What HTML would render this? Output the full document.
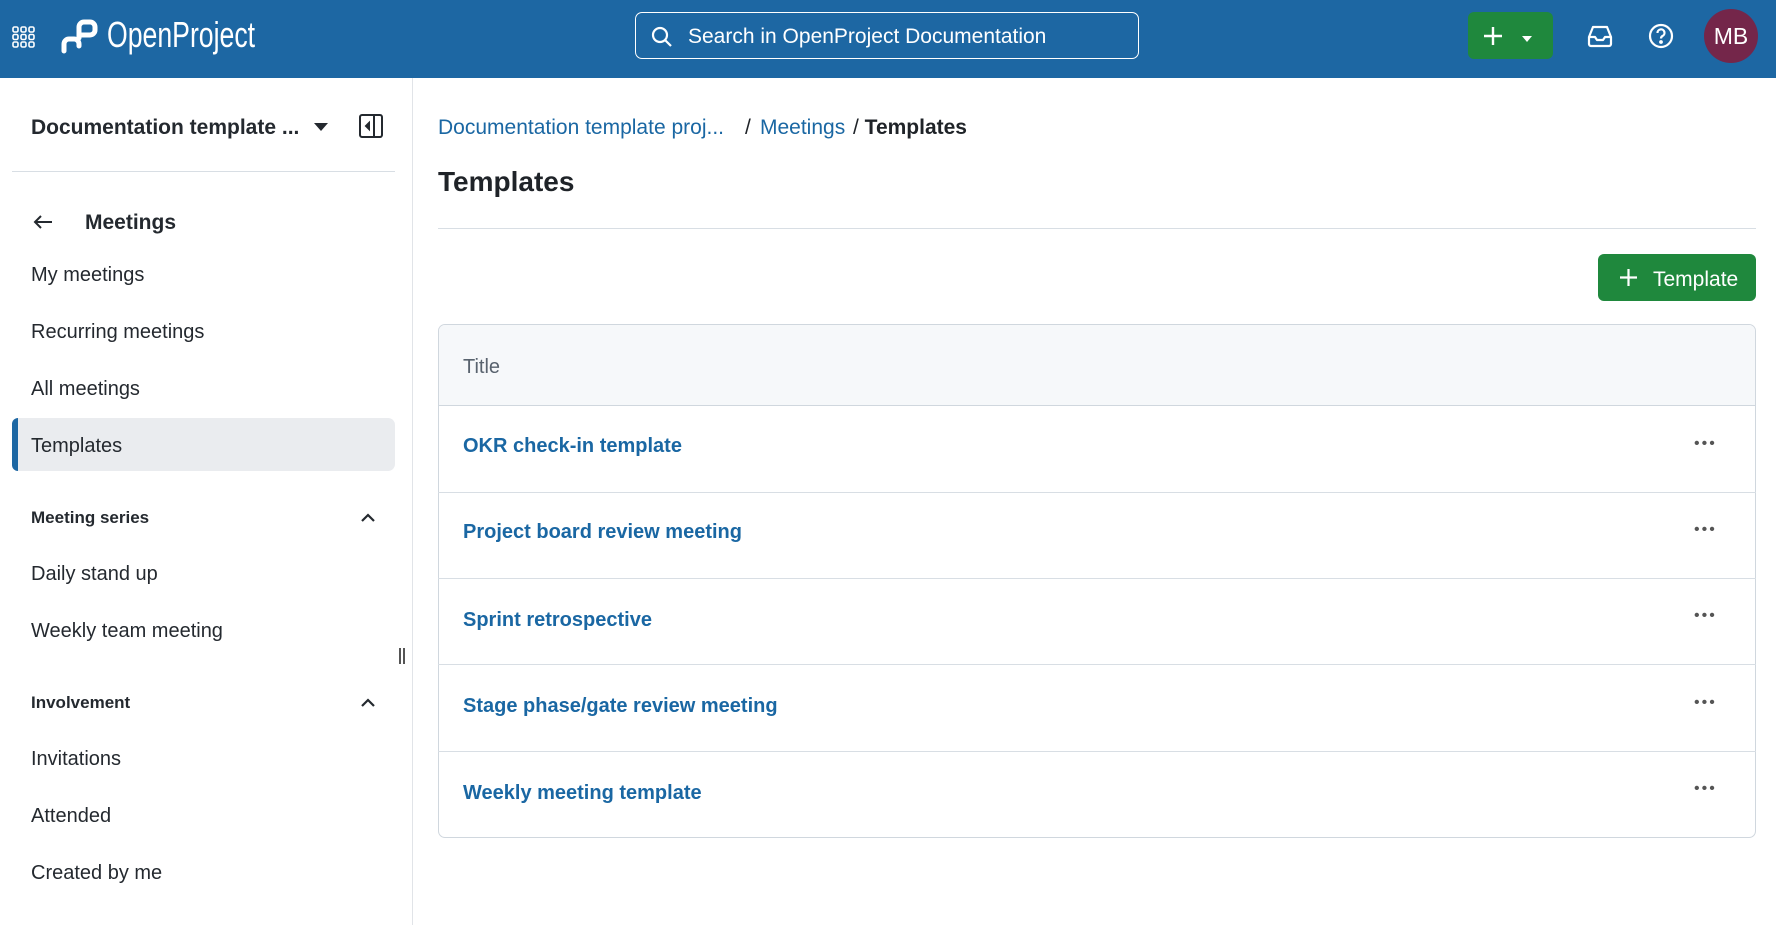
<!DOCTYPE html>
<html><head><meta charset="utf-8"><style>
*{box-sizing:border-box;margin:0;padding:0}
body{width:1776px;height:925px;overflow:hidden;background:#fff;font-family:"Liberation Sans",sans-serif;color:#1f2328;position:relative}
.hdr{position:absolute;left:0;top:0;width:1776px;height:78px;background:#1d67a3}
.abs{position:absolute}
.t{position:absolute;white-space:nowrap;line-height:1}
.side{font-size:20px;color:#24292f}
.link{color:#1a67a3;font-weight:bold;font-size:20px}
.row{position:absolute;left:438px;width:1318px;border-top:1px solid #d8dee4}
.dots{position:absolute;left:1694px;font-size:16px;color:#555;letter-spacing:2px}
</style></head><body>
<div class="hdr"></div>
<svg class="abs" style="left:12px;top:26px" width="24" height="22" viewBox="0 0 24 22" fill="none" stroke="#fff" stroke-width="1.6">
<rect x="1" y="1" width="5" height="5" rx="1.5"/><rect x="9" y="1" width="5" height="5" rx="1.5"/><rect x="17" y="1" width="5" height="5" rx="1.5"/>
<rect x="1" y="8.5" width="5" height="5" rx="1.5"/><rect x="9" y="8.5" width="5" height="5" rx="1.5"/><rect x="17" y="8.5" width="5" height="5" rx="1.5"/>
<rect x="1" y="16" width="5" height="5" rx="1.5"/><rect x="9" y="16" width="5" height="5" rx="1.5"/><rect x="17" y="16" width="5" height="5" rx="1.5"/></svg>
<svg class="abs" style="left:60px;top:18px" width="38" height="37" viewBox="0 0 38 37" fill="none" stroke="#fff" stroke-width="5" stroke-linecap="round" stroke-linejoin="round">
<path d="M4 33 V26 a5 5 0 0 1 5 -5 H14 a5 5 0 0 1 5 5 V28"/><path d="M19 20 V9 a5 5 0 0 1 5 -5 H30 a5 5 0 0 1 5 5 V12 a5 5 0 0 1 -5 5 H19"/></svg>
<div class="t" style="left:107px;top:17px;font-size:36px;color:#fff;transform:scaleX(.74);transform-origin:left">OpenProject</div>
<div class="abs" style="left:635px;top:12px;width:504px;height:47px;border:1px solid #fff;border-radius:7px"></div>
<svg class="abs" style="left:651px;top:26px" width="22" height="22" viewBox="0 0 22 22" fill="none" stroke="#fff" stroke-width="2.2"><circle cx="9" cy="9" r="7"/><path d="M14 14l6 6"/></svg>
<div class="t" style="left:688px;top:26px;font-size:21px;color:#fff">Search in OpenProject Documentation</div>
<div class="abs" style="left:1468px;top:12px;width:85px;height:47px;background:#1f883d;border-radius:6px"></div>
<svg class="abs" style="left:1482px;top:25px" width="22" height="22" viewBox="0 0 22 22" stroke="#fff" stroke-width="2.4"><path d="M11 2v18M2 11h18"/></svg>
<svg class="abs" style="left:1521px;top:35px" width="12" height="8" viewBox="0 0 12 8" fill="#fff"><path d="M1 1h10L6 7z"/></svg>
<svg class="abs" style="left:1587px;top:24px" width="26" height="24" viewBox="0 0 26 24" fill="none" stroke="#fff" stroke-width="2.2" stroke-linejoin="round"><path d="M2 13 L6 3 H20 L24 13 V20 a2 2 0 0 1 -2 2 H4 a2 2 0 0 1 -2 -2Z"/><path d="M2 13 H8 L10 16 H16 L18 13 H24"/></svg>
<svg class="abs" style="left:1648px;top:23px" width="26" height="26" viewBox="0 0 26 26" fill="none" stroke="#fff" stroke-width="2.2"><circle cx="13" cy="13" r="11"/><path d="M9.5 10a3.5 3.5 0 1 1 5 3c-1 .6-1.5 1.2-1.5 2.5"/><circle cx="13" cy="19" r=".8" fill="#fff"/></svg>
<div class="abs" style="left:1704px;top:9px;width:54px;height:54px;border-radius:50%;background:#74264a;color:#fff;font-size:23px;text-align:center;line-height:54px">MB</div>

<div class="abs" style="left:412px;top:78px;width:1px;height:847px;background:#e1e4e8"></div>
<div class="t side" style="left:31px;top:117px;font-weight:bold;font-size:21px">Documentation template ...</div>
<svg class="abs" style="left:313px;top:122px" width="16" height="10" viewBox="0 0 16 10" fill="#24292f"><path d="M1 1h14L8 9z"/></svg>
<svg class="abs" style="left:358px;top:113px" width="26" height="26" viewBox="0 0 26 26" fill="none" stroke="#24292f" stroke-width="2"><rect x="2" y="2" width="22" height="22" rx="2"/><path d="M16 2v22"/><path d="M11 10l-3 3 3 3z" fill="#24292f"/></svg>
<div class="abs" style="left:12px;top:171px;width:383px;height:1px;background:#d8dee4"></div>
<svg class="abs" style="left:33px;top:214px" width="20" height="16" viewBox="0 0 20 16" fill="none" stroke="#24292f" stroke-width="2"><path d="M19 8H2M8 2L2 8l6 6"/></svg>
<div class="t side" style="left:85px;top:212px;font-weight:bold;font-size:21px">Meetings</div>
<div class="t side" style="left:31px;top:265px">My meetings</div>
<div class="t side" style="left:31px;top:322px">Recurring meetings</div>
<div class="t side" style="left:31px;top:379px">All meetings</div>
<div class="abs" style="left:12px;top:418px;width:383px;height:53px;background:#eaecef;border-radius:7px"></div>
<div class="abs" style="left:12px;top:418px;width:6px;height:53px;background:#1d67a3;border-radius:7px 0 0 7px"></div>
<div class="t side" style="left:31px;top:436px">Templates</div>
<div class="t side" style="left:31px;top:509px;font-weight:bold;font-size:17px">Meeting series</div>
<svg class="abs" style="left:360px;top:512px" width="16" height="10" viewBox="0 0 16 10" fill="none" stroke="#24292f" stroke-width="2.2"><path d="M2 9l6-6 6 6"/></svg>
<div class="t side" style="left:31px;top:564px">Daily stand up</div>
<div class="t side" style="left:31px;top:621px">Weekly team meeting</div>
<div class="abs" style="left:399px;top:648px;width:2px;height:16px;background:#555"></div>
<div class="abs" style="left:403px;top:648px;width:2px;height:16px;background:#555"></div>
<div class="t side" style="left:31px;top:694px;font-weight:bold;font-size:17px">Involvement</div>
<svg class="abs" style="left:360px;top:697px" width="16" height="10" viewBox="0 0 16 10" fill="none" stroke="#24292f" stroke-width="2.2"><path d="M2 9l6-6 6 6"/></svg>
<div class="t side" style="left:31px;top:749px">Invitations</div>
<div class="t side" style="left:31px;top:806px">Attended</div>
<div class="t side" style="left:31px;top:863px">Created by me</div>

<div class="t" style="left:438px;top:117px;font-size:21px;color:#1a67a3">Documentation template proj...</div>
<div class="t" style="left:745px;top:117px;font-size:21px;color:#1f2328">/</div>
<div class="t" style="left:760px;top:117px;font-size:21px;color:#1a67a3">Meetings</div>
<div class="t" style="left:853px;top:117px;font-size:21px;color:#1f2328">/ <b>Templates</b></div>
<div class="t" style="left:438px;top:168px;font-size:28px;font-weight:bold;color:#1f2328">Templates</div>
<div class="abs" style="left:438px;top:228px;width:1318px;height:1px;background:#d8dee4"></div>
<div class="abs" style="left:1598px;top:254px;width:158px;height:47px;background:#1f883d;border-radius:6px"></div>
<svg class="abs" style="left:1619px;top:268px" width="19" height="19" viewBox="0 0 19 19" stroke="#fff" stroke-width="2.2"><path d="M9.5 1v17M1 9.5h17"/></svg>
<div class="t" style="left:1653px;top:269px;font-size:21px;color:#fff">Template</div>

<div class="abs" style="left:438px;top:324px;width:1318px;height:514px;border:1px solid #d0d7de;border-radius:7px;overflow:hidden">
<div style="height:81px;background:#f6f8fa;border-bottom:1px solid #d0d7de"></div></div>
<div class="t" style="left:463px;top:357px;font-size:20px;color:#59636e">Title</div>
<div class="row" style="top:492px"></div><div class="row" style="top:578px"></div><div class="row" style="top:664px"></div><div class="row" style="top:751px"></div>
<div class="t link" style="left:463px;top:436px">OKR check-in template</div>
<div class="t link" style="left:463px;top:522px">Project board review meeting</div>
<div class="t link" style="left:463px;top:610px">Sprint retrospective</div>
<div class="t link" style="left:463px;top:696px">Stage phase/gate review meeting</div>
<div class="t link" style="left:463px;top:783px">Weekly meeting template</div>
<div class="t dots" style="top:436px">•••</div>
<div class="t dots" style="top:522px">•••</div>
<div class="t dots" style="top:608px">•••</div>
<div class="t dots" style="top:695px">•••</div>
<div class="t dots" style="top:781px">•••</div>
</body></html>
